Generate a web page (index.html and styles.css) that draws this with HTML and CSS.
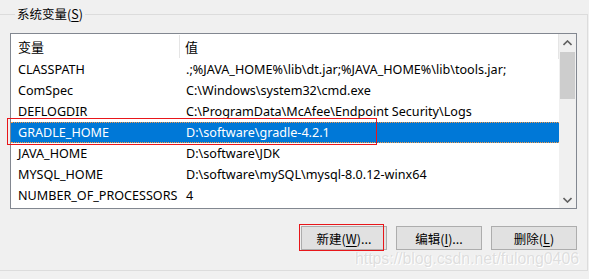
FILE: index.html
```html
<!DOCTYPE html>
<html lang="zh-CN">
<head>
<meta charset="utf-8">
<title>系统变量</title>
<link rel="stylesheet" href="styles.css">
</head>
<body>
<fieldset class="group">
  <legend class="group-label">系统变量(<u>S</u>)</legend>
  <div class="listbox">
    <div class="list">
      <div class="row head"><div class="c1">变量</div><div class="c2">值</div></div>
      <div class="row"><div class="c1">CLASSPATH</div><div class="c2">.;%JAVA_HOME%\lib\dt.jar;%JAVA_HOME%\lib\tools.jar;</div></div>
      <div class="row"><div class="c1">ComSpec</div><div class="c2">C:\Windows\system32\cmd.exe</div></div>
      <div class="row"><div class="c1">DEFLOGDIR</div><div class="c2">C:\ProgramData\McAfee\Endpoint Security\Logs</div></div>
      <div class="row sel"><div class="c1">GRADLE_HOME</div><div class="c2">D:\software\gradle-4.2.1</div></div>
      <div class="row"><div class="c1">JAVA_HOME</div><div class="c2">D:\software\JDK</div></div>
      <div class="row"><div class="c1">MYSQL_HOME</div><div class="c2">D:\software\mySQL\mysql-8.0.12-winx64</div></div>
      <div class="row"><div class="c1">NUMBER_OF_PROCESSORS</div><div class="c2">4</div></div>
    </div>
    <div class="scrollbar">
      <div class="arrow"><svg width="9" height="6" viewBox="0 0 9 6"><path d="M0.5 5 L4.5 1 L8.5 5" fill="none" stroke="#606060" stroke-width="1.6"/></svg></div>
      <div class="track"><div class="thumb"></div></div>
      <div class="arrow"><svg width="9" height="6" viewBox="0 0 9 6"><path d="M0.5 1 L4.5 5 L8.5 1" fill="none" stroke="#606060" stroke-width="1.6"/></svg></div>
    </div>
  </div>
  <div class="buttons">
    <button class="btn">新建(<u>W</u>)...</button>
    <button class="btn">编辑(<u>I</u>)...</button>
    <button class="btn">删除(<u>L</u>)</button>
  </div>
</fieldset>
<div class="mark mark-row"></div>
<div class="mark mark-btn"></div>
<div class="watermark">https://blog.csdn.net/fulong0406</div>
</body>
</html>
```
FILE: styles.css
```css
html, body {
  margin: 0;
  padding: 0;
  background: #f0f0f0;
  width: 589px;
  height: 279px;
  overflow: hidden;
  position: relative;
  font-family: "Noto Sans", "Noto Sans CJK SC", sans-serif;
  font-size: 12.6px;
  color: #000;
}
.group {
  margin: 6px 0 0 -2px;
  width: 590px;
  height: 265px;
  box-sizing: border-box;
  border: 1px solid #dcdcdc;
  padding: 11px 10px 0 11px;
  min-width: 0;
}
.group-label {
  margin-left: 5px;
  padding: 0 2px;
  line-height: 16px;
  height: 16px;
  font-family: "Noto Sans CJK SC", sans-serif;
  font-size: 12.5px;
}
u { text-decoration: underline; text-underline-offset: 2px; }
.listbox {
  display: flex;
  height: 176px;
  box-sizing: border-box;
  border: 1px solid #828790;
  background: #fff;
}
.list {
  flex: 1;
  overflow: hidden;
}
.row {
  display: grid;
  grid-template-columns: 169px 1fr;
  height: 21px;
  line-height: 21px;
  white-space: nowrap;
}
.row .c1 { padding-left: 7px; }
.row .c2 { padding-left: 6px; }
.row.head {
  height: 25px;
  line-height: 25px;
  font-family: "Noto Sans CJK SC", sans-serif;
  font-size: 13px;
  border-right: 1px solid #e5e5e5;
  box-sizing: border-box;
}
.row.head .c1 {
  border-right: 1px solid #e5e5e5;
  margin: 1px 0;
  line-height: 23px;
}
.row.head .c2 { padding-left: 5px; }
.row.sel {
  background: #0078d7;
  color: #fff;
  box-sizing: border-box;
  border-top: 1px dotted #f29a4a;
  border-bottom: 1px dotted #f29a4a;
  line-height: 19px;
}
.scrollbar {
  width: 17px;
  background: #f0f0f0;
  display: flex;
  flex-direction: column;
}
.arrow {
  height: 17px;
  display: flex;
  align-items: center;
  justify-content: center;
}
.track {
  flex: 1;
  padding: 1px 1px 0;
}
.thumb {
  height: 47px;
  background: #cdcdcd;
}
.buttons {
  display: flex;
  justify-content: flex-end;
  gap: 9px;
  margin-top: 17px;
}
.btn {
  width: 86px;
  height: 24px;
  margin: 0;
  padding: 0;
  border: 1px solid #adadad;
  background: #e1e1e1;
  font-family: "Noto Sans CJK SC", sans-serif;
  font-size: 12.5px;
  color: #000;
}
.mark {
  position: absolute;
  border: 1px solid #e8161a;
  box-sizing: border-box;
}
.mark-row { left: 7px; top: 118px; width: 370px; height: 27px; }
.mark-btn { left: 299px; top: 224px; width: 85px; height: 27px; }
.watermark {
  position: absolute;
  left: 355px;
  top: 250px;
  font-family: "Liberation Sans", Arial, sans-serif;
  font-size: 15.8px;
  color: #dedede;
  text-shadow: 1px 1px 0 #ffffff, -1px 0 0 #f8f8f8;
}
```
